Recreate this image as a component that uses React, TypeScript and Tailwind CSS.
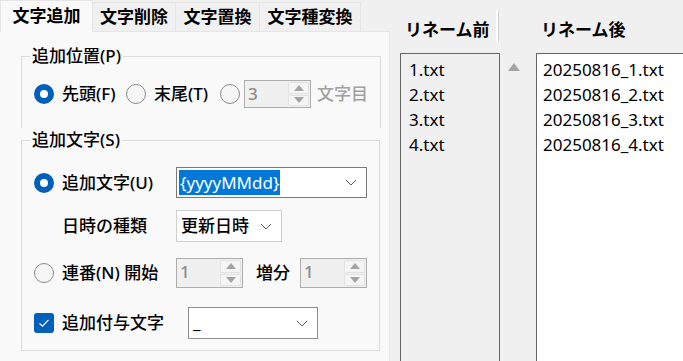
import React from "react";

const tabs = [
  { label: "文字追加", w: "w-[93px]" },
  { label: "文字削除", w: "w-[83px]" },
  { label: "文字置換", w: "w-[84px]" },
  { label: "文字種変換", w: "w-[101px]" },
];

const before = ["1.txt", "2.txt", "3.txt", "4.txt"];
const after = ["20250816_1.txt", "20250816_2.txt", "20250816_3.txt", "20250816_4.txt"];

function Radio({ checked = false }: { checked?: boolean }) {
  if (checked) {
    return (
      <span className="flex h-[20px] w-[20px] shrink-0 items-center justify-center rounded-full bg-[#005fb8]">
        <span className="h-[8px] w-[8px] rounded-full bg-white" />
      </span>
    );
  }
  return <span className="h-[20px] w-[20px] shrink-0 rounded-full border border-[#8a8a8a] bg-[#f6f6f6]" />;
}

function Check() {
  return (
    <span className="flex h-[20px] w-[20px] shrink-0 items-center justify-center rounded-[3px] bg-[#005fb8]">
      <svg width="12" height="10" viewBox="0 0 12 10">
        <polyline points="1.5,5.5 4.5,8.2 10.5,1.8" fill="none" stroke="white" strokeWidth="1.2" />
      </svg>
    </span>
  );
}

function Chevron() {
  return (
    <svg width="12" height="7" viewBox="0 0 12 7" className="shrink-0">
      <polyline points="1,1 6,6 11,1" fill="none" stroke="#5c5c5c" strokeWidth="1" />
    </svg>
  );
}

function Spin({ value }: { value: string }) {
  return (
    <div className="flex h-full w-[67px] shrink-0 border border-[#adadad] bg-[#f0f0f0]">
      <span className="flex-1 pl-[3px] leading-[26px] text-[#8c8c8c]">{value}</span>
      <div className="flex w-[22px] flex-col gap-px py-[1px] pr-[1px]">
        <div className="flex flex-1 items-center justify-center rounded-t-[2px] border border-[#e2e2e2] bg-[#f5f5f5]">
          <svg width="10" height="6" viewBox="0 0 10 6">
            <polygon points="0,6 5,0 10,6" fill="#a3a3a3" />
          </svg>
        </div>
        <div className="flex flex-1 items-center justify-center rounded-b-[2px] border border-[#e2e2e2] bg-[#f5f5f5]">
          <svg width="10" height="6" viewBox="0 0 10 6">
            <polygon points="0,0 10,0 5,6" fill="#a3a3a3" />
          </svg>
        </div>
      </div>
    </div>
  );
}

export default function App() {
  return (
    <div className="flex h-[361px] w-[683px] overflow-hidden bg-[#f0f0f0] font-['Noto_Sans','Noto_Sans_CJK_JP',sans-serif] text-[17px] text-black">
      {/* left: tab control */}
      <div className="flex w-[390px] shrink-0 flex-col">
        <div className="flex h-[31px] items-end">
          {tabs.map((t, i) =>
            i === 0 ? (
              <div
                key={t.label}
                className={`relative z-10 -mb-px flex h-[32px] items-center justify-center border border-b-0 border-[#e5e5e5] bg-[#f9f9f9] pb-[2px] font-semibold ${t.w}`}
              >
                {t.label}
              </div>
            ) : (
              <div
                key={t.label}
                className={`flex h-[29px] items-center justify-center border border-b-0 border-l-0 border-[#e5e5e5] bg-[#f0f0f0] font-semibold ${t.w}`}
              >
                {t.label}
              </div>
            )
          )}
        </div>
        <div className="flex-1 border-t border-r border-[#e5e5e5] bg-[#f9f9f9] pl-[21px] pt-[12px] font-medium">
          <fieldset className="h-[84px] w-[355px] border border-b-0 border-[#dcdcdc] px-[12px] pt-[12px]">
            <legend className="-ml-[4px] px-[2px] leading-[24px]">追加位置(P)</legend>
            <div className="flex h-[28px] items-center whitespace-nowrap">
              <Radio checked />
              <span className="ml-[8px] w-[64px] shrink-0">先頭(F)</span>
              <Radio />
              <span className="ml-[8px] w-[66px] shrink-0">末尾(T)</span>
              <Radio />
              <div className="ml-[4px] h-full shrink-0">
                <Spin value="3" />
              </div>
              <span className="ml-[6px] shrink-0 text-[#a0a0a0]">文字目</span>
            </div>
          </fieldset>
          <fieldset className="w-[355px] border border-[#dcdcdc] px-[12px] pt-[15px] pb-[11px]">
            <legend className="-ml-[4px] px-[2px] leading-[24px]">追加文字(S)</legend>
            <div className="flex h-[31px] items-center whitespace-nowrap">
              <Radio checked />
              <span className="ml-[8px] w-[114px] shrink-0">追加文字(U)</span>
              <div className="flex h-full w-[191px] shrink-0 items-center border border-[#7a7a7a] bg-white pl-[2px] pr-[9px]">
                <span className="bg-[#0078d7] px-[1px] font-normal leading-[25px] text-white">{"{yyyyMMdd}"}</span>
                <span className="flex-1" />
                <Chevron />
              </div>
            </div>
            <div className="mt-[12px] flex h-[32px] items-center whitespace-nowrap pl-[28px]">
              <span className="w-[114px] shrink-0">日時の種類</span>
              <div className="flex h-full w-[106px] shrink-0 items-center border border-[#cfcfcf] bg-white pl-[4px] pr-[9px]">
                <span className="flex-1">更新日時</span>
                <Chevron />
              </div>
            </div>
            <div className="mt-[16px] flex h-[30px] items-center whitespace-nowrap">
              <Radio />
              <span className="ml-[8px] w-[114px] shrink-0">連番(N) 開始</span>
              <Spin value="1" />
              <span className="ml-[13px] w-[44px] shrink-0">増分</span>
              <Spin value="1" />
            </div>
            <div className="mt-[19px] flex h-[32px] items-center whitespace-nowrap">
              <Check />
              <span className="ml-[8px] w-[126px] shrink-0">追加付与文字</span>
              <div className="flex h-full w-[130px] shrink-0 items-center border border-[#8c8c8c] bg-white pl-[4px] pr-[9px]">
                <span className="flex-1 font-normal">_</span>
                <Chevron />
              </div>
            </div>
          </fieldset>
        </div>
      </div>

      {/* right: file lists */}
      <div className="flex flex-1 flex-col pl-[10px]">
        <div className="flex h-[53px] shrink-0 items-start font-semibold">
          <div className="w-[96px] pl-[5px] pt-[18px] leading-[24px]">リネーム前</div>
          <div className="mt-[10px] h-[32px] w-[3px] rounded-[1px] border-r border-[#d2d2d2] bg-white" />
          <div className="w-[37px]" />
          <div className="pl-[5px] pt-[18px] leading-[24px]">リネーム後</div>
        </div>
        <div className="flex flex-1 items-start">
          <div className="h-[320px] w-[100px] shrink-0 border border-[#646464] bg-[#f0f0f0] pl-[8px] pt-[3px]">
            {before.map((f) => (
              <div key={f} className="leading-[25px]">
                {f}
              </div>
            ))}
          </div>
          <div className="w-[36px] shrink-0 pl-[8px] pt-[10px]">
            <svg width="12" height="8" viewBox="0 0 12 8">
              <polygon points="0,8 6,0 12,8" fill="#a3a3a3" />
            </svg>
          </div>
          <div className="h-[320px] w-[170px] shrink-0 border border-[#646464] bg-white pl-[6px] pt-[3px]">
            {after.map((f) => (
              <div key={f} className="leading-[25px]">
                {f}
              </div>
            ))}
          </div>
        </div>
      </div>
    </div>
  );
}
